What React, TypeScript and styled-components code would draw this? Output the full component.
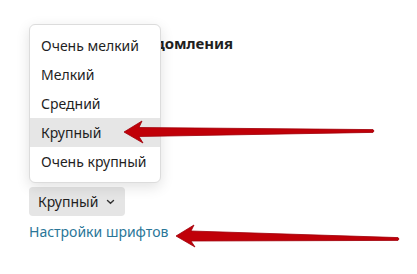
import { FC } from 'react'
import styled, { createGlobalStyle } from 'styled-components'

const GlobalStyle = createGlobalStyle`
  html, body {
    margin: 0;
    padding: 0;
    background: #ffffff;
  }
  body {
    font-family: 'Noto Sans', 'Open Sans', sans-serif;
    color: #1f1f1f;
  }
`

const Page = styled.div`
  position: relative;
  width: 417px;
  height: 274px;
  overflow: hidden;
  padding: 32px 0 0 29px;
  box-sizing: border-box;
`

const Heading = styled.div`
  font-size: 15px;
  font-weight: 700;
  line-height: 22px;
  letter-spacing: -0.1px;
  white-space: nowrap;
`

const Picker = styled.div`
  position: relative;
  margin-top: 133px;
  width: max-content;
`

const Menu = styled.div`
  position: absolute;
  left: 0;
  bottom: calc(100% + 4px);
  width: 132px;
  padding: 6px 0;
  background: #ffffff;
  border: 1px solid #dcdcdc;
  border-radius: 6px;
  box-shadow: 0 4px 14px rgba(0, 0, 0, 0.12);
  box-sizing: border-box;
`

const MenuItem = styled.div<{ $active?: boolean }>`
  height: 29px;
  display: flex;
  align-items: center;
  padding-left: 11px;
  font-size: 14px;
  white-space: nowrap;
  background: ${p => (p.$active ? '#e6e6e6' : 'transparent')};
`

const Button = styled.div`
  display: inline-flex;
  align-items: center;
  gap: 8px;
  height: 29px;
  padding: 0 10px 0 9px;
  background: #e5e5e5;
  border-radius: 4px;
  font-size: 14px;
`

const Link = styled.div`
  margin-top: 5px;
  font-size: 14px;
  line-height: 22px;
  color: #2a7698;
`

const Arrows = styled.svg`
  position: absolute;
  left: 0;
  top: 0;
  pointer-events: none;
`

const sizes = ['Очень мелкий', 'Мелкий', 'Средний', 'Крупный', 'Очень крупный']

const Arrow: FC<{ tipX: number; tipY: number; tailX: number; tailY: number; headLen: number; headHalf: number; shaft: number }> = ({
  tipX,
  tipY,
  tailX,
  tailY,
  headLen,
  headHalf,
  shaft,
}) => {
  const bx = tipX + headLen
  const d = `M ${tipX} ${tipY}
    L ${bx + 2} ${tipY - headHalf}
    L ${bx - 1} ${tipY - shaft / 2}
    L ${tailX} ${tailY - 1.4}
    Q ${tailX + 2} ${tailY} ${tailX} ${tailY + 1.4}
    L ${bx - 1} ${tipY + shaft / 2}
    L ${bx + 3} ${tipY + headHalf}
    Z`
  return <path d={d} fill="#c00008" stroke="#a0000a" strokeWidth="0.8" strokeLinejoin="round" />
}

export default function App() {
  return (
    <>
      <GlobalStyle />
      <Page>
        <Heading>Размер окна уведомления</Heading>
        <Picker>
          <Menu>
            {sizes.map(s => (
              <MenuItem key={s} $active={s === 'Крупный'}>
                {s}
              </MenuItem>
            ))}
          </Menu>
          <Button>
            Крупный
            <svg width="9" height="6" viewBox="0 0 9 6">
              <path d="M1.5 1.5 L4.5 4.3 L7.5 1.5" fill="none" stroke="#333" strokeWidth="1.4" strokeLinecap="round" />
            </svg>
          </Button>
        </Picker>
        <Link>Настройки шрифтов</Link>
        <Arrows width="417" height="274" viewBox="0 0 417 274">
          <Arrow tipX={124} tipY={132} tailX={373} tailY={131} headLen={16} headHalf={11} shaft={9} />
          <Arrow tipX={176} tipY={236} tailX={398} tailY={239} headLen={16} headHalf={11} shaft={10} />
        </Arrows>
      </Page>
    </>
  )
}
